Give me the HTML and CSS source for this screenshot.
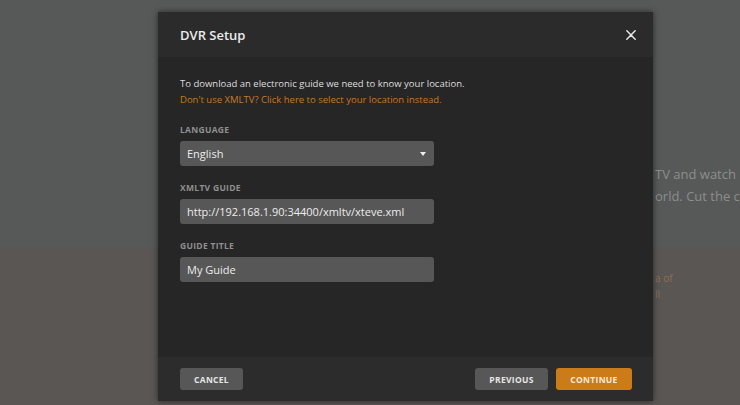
FILE: index.html
```html
<!DOCTYPE html>
<html lang="en">
<head>
<meta charset="utf-8">
<title>DVR Setup</title>
<link rel="stylesheet" href="styles.css">
</head>
<body>
<div class="page">
  <div class="hero">
    <p class="hero-line">TV and watch</p>
    <p class="hero-line">orld. Cut the co</p>
  </div>
  <div class="promo">
    <p class="promo-line">a of</p>
    <p class="promo-line">ll</p>
  </div>

  <div class="modal">
    <div class="modal-header">
      <h1 class="modal-title">DVR Setup</h1>
      <span class="close">
        <svg viewBox="0 0 12 12" width="10" height="10"><path d="M1 1 L11 11 M11 1 L1 11" stroke="#e6e6e6" stroke-width="1.8" stroke-linecap="round"/></svg>
      </span>
    </div>
    <div class="modal-body">
      <p class="intro">To download an electronic guide we need to know your location.</p>
      <p class="link">Don't use XMLTV? Click here to select your location instead.</p>

      <div class="field">
        <div class="label">Language</div>
        <div class="input select">English<span class="caret"></span></div>
      </div>
      <div class="field">
        <div class="label">XMLTV Guide</div>
        <div class="input">http://192.168.1.90:34400/xmltv/xteve.xml</div>
      </div>
      <div class="field">
        <div class="label">Guide Title</div>
        <div class="input">My Guide</div>
      </div>
    </div>
    <div class="modal-footer">
      <button class="btn btn-cancel">CANCEL</button>
      <div class="spacer"></div>
      <button class="btn btn-prev">PREVIOUS</button>
      <button class="btn btn-primary">CONTINUE</button>
    </div>
  </div>
</div>
</body>
</html>
```

FILE: styles.css
```css
* { box-sizing: border-box; }
html, body { margin: 0; padding: 0; }
body {
  width: 740px;
  height: 405px;
  overflow: hidden;
  background: #575958;
  font-family: "Open Sans", "Noto Sans", "Liberation Sans", sans-serif;
}
.page {
  position: relative;
  width: 740px;
  height: 405px;
  overflow: hidden;
  background: #575958;
}
.hero {
  height: 248px;
  padding: 163px 0 0 655px;
}
.hero-line {
  margin: 0;
  white-space: nowrap;
  font-size: 13px;
  line-height: 22px;
  color: #8d8d8d;
}
.promo {
  height: 157px;
  background: #595654;
  padding: 22px 0 0 655px;
}
.promo-line {
  margin: 0;
  white-space: nowrap;
  font-size: 10px;
  line-height: 16px;
  color: #8c7050;
}

.modal {
  position: absolute;
  left: 158px;
  top: 12px;
  width: 495px;
  height: 389px;
  background: #262626;
  box-shadow: 0 0 6px rgba(0,0,0,0.55);
  display: flex;
  flex-direction: column;
}
.modal-header {
  height: 45px;
  background: #2b2b2b;
  display: flex;
  align-items: center;
  padding: 0 16px 0 22px;
}
.modal-title {
  flex: 1;
  margin: 0;
  font-size: 13px;
  font-weight: 600;
  color: #ececec;
}
.close {
  display: flex;
  width: 12px;
  height: 12px;
  align-items: center;
  justify-content: center;
}
.modal-body {
  flex: 1;
  padding: 19px 22px 0;
}
.intro, .link {
  margin: 0;
  font-size: 9.5px;
  line-height: 16px;
}
.intro { color: #dedede; }
.link { color: #c47a27; }
.field { margin-top: 16px; }
.label {
  font-size: 8.5px;
  line-height: 12px;
  font-weight: 700;
  text-transform: uppercase;
  letter-spacing: 0.3px;
  color: #8f8f8f;
  margin-bottom: 5px;
}
.input {
  width: 254px;
  height: 25px;
  background: #575757;
  border-radius: 3px;
  padding: 0 7px;
  display: flex;
  align-items: center;
  font-size: 11px;
  color: #ececec;
}
.select { justify-content: space-between; }
.caret {
  width: 0;
  height: 0;
  border-left: 3px solid transparent;
  border-right: 3px solid transparent;
  border-top: 4px solid #eeeeee;
  margin-right: 1px;
}
.modal-footer {
  height: 44px;
  background: #2c2c2c;
  display: flex;
  align-items: center;
  gap: 8px;
  padding: 0 21px 0 22px;
}
.spacer { flex: 1; }
.btn {
  height: 22px;
  border: none;
  border-radius: 3px;
  font-family: "Open Sans", "Noto Sans", sans-serif;
  font-size: 8.5px;
  font-weight: 700;
  letter-spacing: 0.3px;
  color: #e6e6e6;
  background: #575757;
  padding: 0;
}
.btn-cancel { width: 63px; }
.btn-prev { width: 73px; }
.btn-primary { width: 76px; background: #cc7b19; color: #f7ead8; }
```
